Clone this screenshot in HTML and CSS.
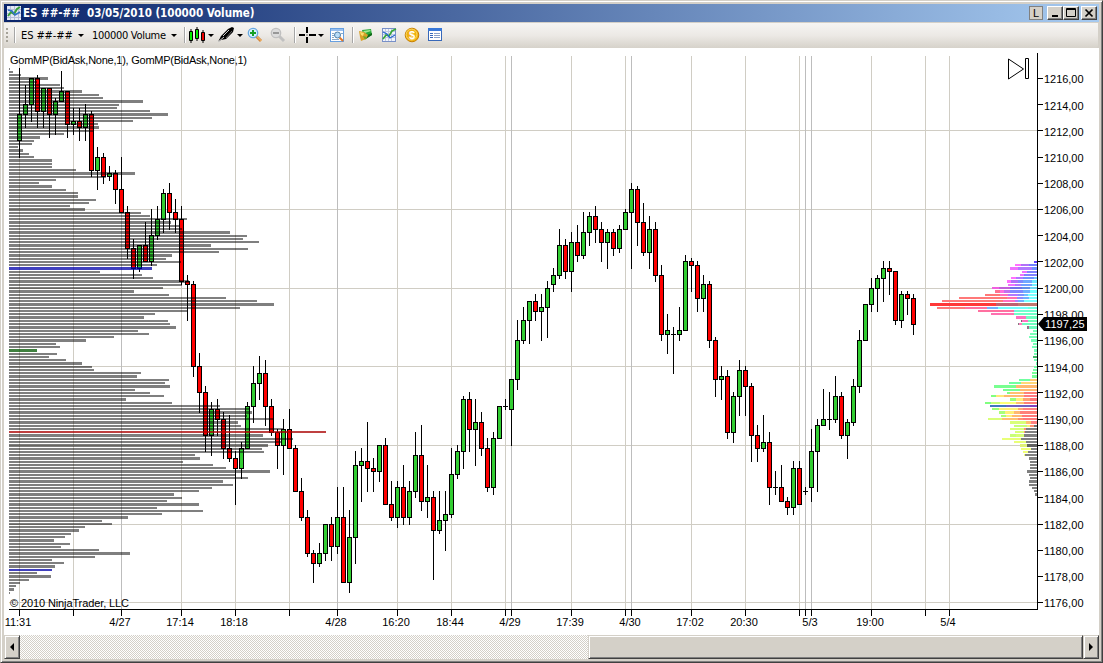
FILE: index.html
```html
<!DOCTYPE html>
<html lang="en">
<head>
    <meta charset="UTF-8">
    <title>ES ##-## 03/05/2010 (100000 Volume)</title>
    <link rel="stylesheet" href="styles.css">
</head>
<body>
    <div class="window">
        <div class="titlebar">
            <svg class="title-icon" width="14" height="14" viewBox="0 0 14 14">
                <rect width="14" height="14" fill="#e4e8f4"/>
                <path d="M3.5 0v14M7.5 0v14M11.5 0v14M0 3.5h14M0 7.5h14M0 11.5h14" stroke="#b4bcd8"/>
                <path d="M1 10l3-4 3 2 3-5 3-2" stroke="#38a038" stroke-width="2" fill="none"/>
                <path d="M1 4l4 1 3 4 5-3" stroke="#3070c8" stroke-width="1.6" fill="none"/>
            </svg>
            <span class="title">ES ##-##&nbsp; 03/05/2010 (100000 Volume)</span>
            <div class="title-buttons">
                <span class="tbtn link-btn">L</span>
                <span class="tbtn min-btn"><svg width="12" height="12"><rect x="3" y="8" width="6" height="2"/></svg></span>
                <span class="tbtn max-btn"><svg width="12" height="12"><path d="M1.5 1.5h9v8h-9zM1 2.5h10" fill="none" stroke="#000"/></svg></span>
                <span class="tbtn close-btn"><svg width="12" height="12"><path d="M2.5 2.5l7 7M9.5 2.5l-7 7" stroke="#000" stroke-width="1.7"/></svg></span>
            </div>
        </div>

        <div class="toolbar">
            <span class="grip"></span>
            <span class="sep"></span>
            <span class="tool-text instrument">ES ##-##</span>
            <span class="arrow wide"></span>
            <span class="tool-text interval">100000 Volume</span>
            <span class="arrow wide"></span>
            <span class="sep"></span>
            <svg width="18" height="18" viewBox="0 0 18 18">
                <path d="M3 3v14M9 1v14M15 4v13" stroke="#000"/>
                <path d="M1.5 5.5h3v9h-3z" fill="#0e0" stroke="#000"/>
                <path d="M7.500 3.5h3v9h-3z" fill="#0e0" stroke="#000"/>
                <path d="M13.500 6.5h3v8h-3z" fill="#e00" stroke="#000"/>
            </svg>
            <span class="arrow"></span>
            <svg width="18" height="18" viewBox="0 0 18 18">
                <path d="M1 16l3-6 7-7 4-2 2 1-1 4-7 7-5 1z" fill="#000"/>
                <path d="M6 10l6-6M1 16l6-5" stroke="#ccc"/>
                <path d="M9 12l6-7" stroke="#666"/>
            </svg>
            <span class="arrow"></span>
            <svg width="16" height="16" viewBox="0 0 16 16">
                <path d="M9 9l5 5" stroke="#d88838" stroke-width="3"/>
                <path d="M9.5 9l5 5" stroke="#f8c880"/>
                <circle cx="6" cy="6" r="4.7" fill="#d8f0ff" stroke="#68a8e0" stroke-width="1.3"/>
                <path d="M6 3v6M3 6h6" stroke="#18a028" stroke-width="2"/>
            </svg>
            <svg width="16" height="16" viewBox="0 0 16 16">
                <path d="M9 9l5 5" stroke="#c0c0c0" stroke-width="3"/>
                <circle cx="6" cy="6" r="4.7" fill="#dcdcdc" stroke="#c0c0c0" stroke-width="1.3"/>
                <path d="M3 6h6" stroke="#989898" stroke-width="2"/>
            </svg>
            <span class="sep"></span>
            <svg width="17" height="16" viewBox="0 0 17 16">
                <path d="M0 8h6M10 8h7M8 0v6M8 10v6" stroke="#000" stroke-width="2"/>
                <path d="M7.5 8h1" stroke="#000"/>
            </svg>
            <span class="arrow"></span>
            <svg width="16" height="16" viewBox="0 0 16 16">
                <rect x="1.5" y="1.5" width="13" height="13" fill="#fff" stroke="#68a0e0"/>
                <path d="M2 3h12" stroke="#98c0f0" stroke-width="2"/>
                <path d="M3 6.5h2M3 8.5h2M3 10.5h2M3 12.5h7M12 6.5h2" stroke="#88a8c8"/>
                <path d="M10.5 10.5l3.5 3.5" stroke="#e07828" stroke-width="2"/>
                <circle cx="8.5" cy="8" r="3" fill="#b8dcf8" stroke="#5080a8"/>
            </svg>
            <span class="sep"></span>
            <svg width="16" height="16" viewBox="0 0 16 16">
                <path d="M4 3l9-1 1 6-8 4z" fill="#28a838"/>
                <path d="M5 4l7-1 1 1-6 2z" fill="#a0e890"/>
                <path d="M7 9l7-3v2l-6 4z" fill="#106818"/>
                <path d="M1 4l5 1 4 3-2 4-5 2-1-4z" fill="#d8a028"/>
                <path d="M2 5l4 1-1 3-2-1z" fill="#f8e070"/>
                <path d="M5 9l4 1-2 3z" fill="#70a820"/>
            </svg>
            <svg width="16" height="16" viewBox="0 0 16 16">
                <rect x="1.5" y="1.5" width="13" height="13" fill="#f0f4fc" stroke="#7890c8"/>
                <path d="M4.5 2v12M7.5 2v12M10.5 2v12M2 4.5h12M2 7.5h12M2 10.5h12" stroke="#c0c8e0"/>
                <path d="M2 12l3-4 3 1 3-5 4-2" stroke="#38a838" stroke-width="1.7" fill="none"/>
                <path d="M2 5l4 2 3 4 5-3" stroke="#2868d0" stroke-width="1.3" fill="none"/>
            </svg>
            <svg width="16" height="16" viewBox="0 0 16 16">
                <circle cx="8" cy="8" r="6.8" fill="#f0b010" stroke="#c88000"/>
                <circle cx="7.5" cy="7.5" r="5.4" fill="none" stroke="#f8d868"/>
                <text class="coin" x="8" y="12" text-anchor="middle">$</text>
            </svg>
            <svg width="16" height="16" viewBox="0 0 16 16">
                <rect x="1.5" y="1.5" width="13" height="12" fill="#fff" stroke="#3868b8"/>
                <path d="M1 2.500h14" stroke="#3878d8" stroke-width="3"/>
                <path d="M3 6.5h3M3 8.5h3M3 10.5h3" stroke="#3868b8"/>
                <path d="M7 6.5h6M7 8.5h6M7 10.5h6" stroke="#88a0c8"/>
            </svg>
        </div>

        <svg id="chart" class="chart" width="1095" height="587" viewBox="4 48 1095 587"></svg>

        <div class="scrollbar">
            <span class="scroll-btn"><svg width="5" height="8"><path d="M4 0v8L0 4z"/></svg></span>
            <span class="track"></span>
            <span class="thumb"></span>
            <span class="scroll-btn"><svg width="5" height="8"><path d="M0 0v8l4-4z"/></svg></span>
        </div>
    </div>

    <script>
        const NS = 'http://www.w3.org/2000/svg';
        const chart = document.getElementById('chart');

        function add(tag, attrs, text) {
            const el = document.createElementNS(NS, tag);
            for (const key in attrs) el.setAttribute(key, attrs[key]);
            if (text) el.textContent = text;
            chart.appendChild(el);
            return el;
        }

        function rect(x, y, w, h, fill, opacity) {
            add('rect', { x, y, width: w, height: h, fill, 'fill-opacity': opacity || 1 });
        }

        // price -> y, one tick is 0.25
        function priceY(price) {
            return 130.9 + (1212 - price) * 13.104;
        }

        function rowAt(price) {
            const top = Math.floor(priceY(price) - 0.64);
            const next = Math.floor(priceY(price - 0.25) - 0.64);
            return { top, height: next - top - 1 };
        }

        // [x, label, session start]
        const times = [
            [19, '11:31'], [73], [121, '4/27', 1], [181, '17:14'], [235, '18:18'], [289],
            [337, '4/28', 1], [397, '16:20'], [451, '18:44'], [505], [511, '4/29', 1],
            [571, '17:39'], [625], [631, '4/30', 1], [691, '17:02'], [745, '20:30'],
            [799], [805, '', 1], [811, '5/3', 1], [871, '19:00'], [925], [949, '5/4']
        ];

        // grid
        for (let p = 1212; p >= 1176; p -= 6) {
            rect(9, Math.floor(priceY(p)), 1028, 1, '#d0cdc4');
        }
        times.forEach(([x, label, session]) => {
            rect(x, 56, 1, 553, session ? '#bdbdbd' : '#d0cdc4');
        });

        // [high, body top, body bottom, low, up]  (up = 2 means open equals close)
        const candles = [
            [68,114,141,158,1],[85,104,115,128,1],[78,78,105,122,1],[75,78,112,128,0],[88,88,112,128,1],
            [88,88,115,138,0],[98,101,115,135,1],[71,91,102,102,1],[91,91,125,138,0],[108,121,125,135,1],
            [108,121,128,141,0],[104,114,128,141,1],[111,114,171,177,0],[147,157,171,190,1],[153,157,177,184,0],
            [166,173,177,181,1],[170,173,190,204,0],[157,189,213,213,0],[206,212,249,259,0],[239,248,269,279,0],
            [245,245,269,272,1],[222,245,262,262,0],[209,235,262,266,1],[206,219,236,240,1],[189,193,220,233,1],
            [183,193,213,230,0],[199,212,220,233,0],[206,219,282,285,0],[275,281,285,321,0],[281,284,367,377,0],
            [353,366,393,413,0],[386,392,436,452,0],[402,409,436,456,1],[399,409,420,436,0],[412,419,449,459,0],
            [415,448,459,462,0],[451,458,469,505,0],[442,448,469,479,1],[402,406,449,449,1],[366,383,407,423,1],
            [356,373,384,400,1],[360,373,407,426,0],[399,406,433,436,0],[429,432,446,469,0],[419,429,446,475,1],
            [409,429,449,449,0],[445,448,492,492,0],[478,491,518,521,0],[510,517,554,557,0],[550,553,564,583,0],
            [543,553,564,567,1],[524,524,554,561,1],[517,524,547,561,0],[487,517,547,554,1],[487,517,583,583,0],
            [510,537,583,593,1],[451,465,538,564,1],[448,461,466,502,1],[422,461,469,492,0],[458,468,472,492,0],
            [445,445,472,482,1],[438,445,505,505,0],[481,504,518,521,0],[481,487,518,528,1],[465,487,518,525,0],
            [481,491,518,525,1],[432,455,492,498,1],[425,455,502,511,0],[465,497,502,518,1],[491,497,531,580,0],
            [491,520,531,534,1],[491,514,521,551,1],[448,474,515,518,1],[445,451,475,479,1],[396,399,452,469,1],
            [392,399,430,452,0],[399,422,430,466,1],[412,422,449,456,0],[438,448,488,492,0],[432,438,488,495,1],
            [406,406,439,439,1],[399,406,407,410,2],[379,379,410,446,1],[320,340,380,390,1],[307,320,341,344,1],
            [301,301,321,344,1],[294,301,312,321,0],[294,307,312,341,1],[281,288,308,338,1],[268,275,285,292,1],
            [229,245,276,279,1],[239,245,272,279,0],[232,242,272,292,1],[225,242,256,262,0],[212,232,256,259,1],
            [212,216,233,246,1],[206,216,230,243,0],[222,229,243,262,0],[229,232,243,269,1],[229,232,249,256,0],
            [225,229,249,253,1],[209,212,230,230,1],[183,189,213,269,1],[186,189,223,246,0],[203,222,253,256,0],
            [216,229,253,269,1],[222,229,276,282,0],[265,275,335,341,0],[314,330,335,354,1],[327,334,335,374,2],
            [307,330,335,341,1],[255,261,331,331,1],[258,261,266,292,0],[261,265,299,312,0],[275,284,299,312,1],
            [281,284,341,348,0],[337,340,380,397,0],[366,376,380,400,1],[370,376,433,439,0],[392,396,433,443,1],
            [360,370,397,416,1],[366,370,387,416,0],[383,386,436,462,0],[425,435,449,462,0],[415,442,449,452,1],
            [432,442,488,505,0],[471,487,488,495,2],[465,487,502,502,0],[497,501,508,515,0],[461,468,508,515,1],
            [461,468,505,505,0],[487,491,492,495,2],[429,451,488,502,1],[419,425,452,492,1],[389,419,426,426,1],
            [392,419,420,430,2],[376,396,420,423,1],[392,396,436,439,0],[419,422,436,459,1],[379,386,423,426,1],
            [330,340,387,393,1],[304,304,341,341,1],[278,288,305,312,1],[275,278,289,312,1],[261,268,279,302,1],
            [261,268,272,295,0],[271,271,321,325,0],[291,294,321,328,1],[291,294,299,315,0],[294,298,325,335,0]
        ];

        candles.forEach(([high, top, bottom, low, up], i) => {
            const x = 19 + i * 6;
            rect(x, high, 1, low - high, '#000');
            rect(x - 2, top, 5, bottom - top, '#000');
            if (up !== 2) {
                rect(x - 1, top + 1, 3, bottom - top - 2, up ? '#32cd32' : '#f00');
            }
        });

        // volume at price from 1216.75 down, right edges in thirds of a pixel
        const volume = [
            29,39,62,144,110,180,192,246,297,309,429,357,351,450,504,456,399,294,297,278,
            192,120,102,96,54,69,87,102,156,156,156,228,405,318,168,117,156,198,234,234,
            288,267,210,255,423,450,561,513,540,546,690,741,729,777,633,744,657,516,498,543,
            471,456,300,426,459,567,546,489,402,507,678,771,822,720,563,465,432,504,510,528,
            414,447,342,258,168,180,111,171,147,198,246,276,282,423,411,507,495,510,405,450,
            492,378,516,660,748,756,741,820,714,723,850,978,789,879,843,804,786,792,585,600,
            549,639,678,810,706,744,669,699,636,597,522,546,501,597,471,609,486,384,306,336,
            255,237,213,195,162,210,183,297,390,285,156,192,165,156,111,153,87,60,48,42,30
        ];
        const marked = { 61: '#0000aa', 86: '#005500', 111: '#aa0000', 153: '#0000aa' };

        volume.forEach((edge, k) => {
            const { top, height } = rowAt(1216.75 - k * 0.25);
            const w = Math.round(edge / 3) - 9;
            rect(9, top, w, height, marked[k] || '#000', marked[k] ? 0.75 : 0.5);
        });

        // session profile from 1202 down: "offset color offset color ...", up to the price axis
        const session = [
            '357 6040ff',
            '300 ff70ff 318 b070f8 342 7080ff',
            '285 f070ff 309 b078ff 351 7090ff',
            '321 f070ff 336 8080ff',
            '315 f070ff 327 8080ff',
            '288 ff70ff 303 b078ff 323 7090ff 358 70c8ff',
            '276 ff70ff 288 b070f8 309 8088ff 325 70a8ff 350 70e8ff',
            '279 f070ff 300 b078ff 318 70a0ff 350 70f0ff',
            '231 f060e0 253 c060d8 285 7070e8 320 6090e8 345 70d8f0',
            '240 ff7090 254 ff70e0 266 c070f0 285 8088ff 325 70b0ff 345 70ffff',
            '210 ff7878 254 ff70c0 280 b078ff 309 8090ff 327 70c0ff 340 78ffff',
            '132 ff7878 275 ff70b0 305 9088ff 325 70b0ff 342 78ffff',
            '81 ff7878 264 ff70c0 300 b080ff 309 70b0ff 327 78ffff',
            '45 ff3838 243 c06070 309 c07870',
            '66 ff7878 150 ff70a0 216 70b0ff 250 70ffff 340 70ffe0',
            '189 ff70a0 297 70e0ff 300 70ffd0',
            '228 ff70b0 297 70ffc8',
            '303 ff70c0 333 70ffc0',
            '318 707070 321 ff70c0 339 70ffb8',
            '309 808080 312 ff80c0 321 70ffc0',
            '336 808080 339 b06090 342 70ffc0',
            '354 78ffb8', '345 78ffb8', '342 78ffb8', '348 78ffb8', '354 78ffb8', '351 78ffb8',
            '357 78ffb8', '357 78ffb8', '354 40b868', '357 78ffb8', '363 78ffb8', '357 78ffa8',
            '354 78ffa8', '351 78ff98', '351 78ff98',
            '312 70ffa0 345 ffc870',
            '282 70ffa0 318 ffd878',
            '237 78ff90 303 ffb870',
            '264 78ff90 315 ffb870',
            '276 80ff80 285 ffc070 327 ff8078',
            '228 80ff80 244 ffe878 267 ffb870 327 ff7880',
            '285 98ff78 303 fff078 324 ffa070 345 ff7878',
            '210 80ff80 228 c8ff78 255 ffff78 303 ffc070 327 ff8078',
            '225 4078c0 273 7060c0 345 8040c0',
            '231 98ff78 252 fff078 309 ffa870 325 ff8080',
            '252 a8ff78 270 fff078 297 ffb870 315 ff8078',
            '258 a8ff78 273 fff078 291 ffb870 320 ff7878',
            '219 d8ff78 261 ffc070 309 ff9070 325 ff7878',
            '285 d8ff78 333 ffc070 348 ff8080',
            '297 c8ff78 336 fff078 345 ff9070 357 707070',
            '285 d8ff78 327 ff9070 333 808080',
            '300 d8ff78 327 ff9070 330 808080',
            '285 c8ff78 303 d8ff78 327 808080',
            '261 e8ff78 318 808080',
            '297 e8ff78 333 808080',
            '315 e0f078 336 606060',
            '318 f0ff78 348 808080',
            '324 f0ff78 339 808080',
            '327 f0ff78 330 808080',
            '342 808080', '345 808080', '345 808080', '345 808080', '336 808080', '342 808080',
            '345 808080', '342 808080', '342 808080', '351 808080', '357 808080', '360 808080'
        ];

        session.forEach((row, j) => {
            const { top, height } = rowAt(1202 - j * 0.25);
            const parts = row.split(' ');
            for (let n = 0; n < parts.length; n += 2) {
                const x = 915 + Math.round(parts[n] / 3);
                const end = parts[n + 2] ? 915 + Math.round(parts[n + 2] / 3) : 1037;
                rect(x, top, end - x, height, '#' + parts[n + 1]);
            }
        });

        // axes
        rect(1037, 53, 1, 557, '#000');
        rect(9, 609, 1029, 1, '#000');
        times.forEach(([x, label]) => {
            rect(x, 609, 1, 7, '#000');
            if (label) add('text', { x: x - 1, y: 626, 'text-anchor': 'middle' }, label);
        });
        for (let p = 1216; p >= 1176; p -= 2) {
            rect(1037, Math.floor(priceY(p)), 6, 1, '#000');
            add('text', { x: 1044, y: Math.round(priceY(p) + 4.85), textLength: 39.5 }, p + ',00');
        }

        // last price
        add('path', { d: 'M1038 324l6-7h43v14h-43z' });
        add('text', { x: 1045, y: 328, textLength: 39.5, class: 'last-price' }, '1197,25');

        add('text', { x: 10, y: 64, textLength: 237 }, 'GomMP(BidAsk,None,1), GomMP(BidAsk,None,1)');
        add('text', { x: 10, y: 607, textLength: 119 }, '© 2010 NinjaTrader, LLC');

        // jump to last bar
        add('path', { d: 'M1008.5 59v20l15-10zM1025.5 58.5h3v20h-3z', fill: 'none', stroke: '#000' });
    </script>
</body>
</html>
```
FILE: styles.css
```css
body {
    margin: 0;
    overflow: hidden;
    background-color: #d4d0c8;
    font-family: "DejaVu Sans Condensed", "DejaVu Sans", sans-serif;
    font-size: 11px;
}
.window {
    box-sizing: border-box;
    width: 1103px;
    height: 663px;
    padding: 3px;
    border: 1px solid #d4d0c8;
    border-right-color: #404040;
    border-bottom-color: #404040;
    box-shadow: inset 1px 1px #fff, inset -1px -1px #808080;
}
.titlebar {
    display: flex;
    align-items: center;
    width: 1095px;
    height: 18px;
    background: linear-gradient(to right, #0a246a, #a6caf0);
}
.title-icon {
    margin-left: 3px;
}
.title {
    flex: 1;
    margin-left: 2px;
    color: #fff;
    font-weight: bold;
    font-size: 11.5px;
    letter-spacing: -0.03px;
    white-space: nowrap;
}
.title-buttons {
    display: flex;
    margin-right: 2px;
}
.tbtn {
    box-sizing: border-box;
    display: flex;
    align-items: center;
    justify-content: center;
    width: 16px;
    height: 14px;
    background-color: #d4d0c8;
    border: 1px solid;
    border-color: #fff #404040 #404040 #fff;
    box-shadow: inset -1px -1px #808080;
}
.link-btn {
    width: 14px;
    margin-right: 4px;
    border-color: #808080;
    box-shadow: none;
    font-family: "Liberation Sans", sans-serif;
}
.close-btn {
    margin-left: 2px;
}
.toolbar {
    display: grid;
    grid-template-columns: 10px 7px 56px 16px 77px 14px 4px 18px 11px 18px 12px 23px 24px 5px 17px 13px 23px 6px 23px 23px 23px 23px;
    align-items: center;
    box-sizing: border-box;
    width: 1094px;
    height: 26px;
    padding-bottom: 1px;
    border-top: 1px solid #d4d0c8;
    border-radius: 0 0 3px 3px;
    background: linear-gradient(#f6f5f3, #ece9e5 50%, #d6d2ca);
}
.grip {
    width: 2px;
    height: 15px;
    margin-left: 2px;
    background: repeating-linear-gradient(#a5a298 0 2px, transparent 2px 4px);
}
.sep {
    width: 1px;
    height: 16px;
    background-color: #a6a6a6;
    box-shadow: 1px 0 #fff;
}
.tool-text {
    white-space: nowrap;
}
.instrument {
    letter-spacing: -0.1px;
}
.interval {
    margin-left: -1px;
    letter-spacing: -0.3px;
}
.arrow {
    width: 0;
    height: 0;
    margin-left: 2px;
    border: 3px solid transparent;
    border-top-color: #000;
    border-bottom: 0;
}
.arrow.wide {
    margin-left: 1px;
}
.coin {
    fill: #fff;
    font-family: "Liberation Sans", sans-serif;
    font-size: 11px;
    font-weight: bold;
}
.chart {
    display: block;
    background-color: #fff;
    font-family: "Liberation Sans", Arial, sans-serif;
    font-size: 11px;
}
.last-price {
    fill: #fff;
}
.scrollbar {
    display: flex;
    width: 1095px;
    height: 24px;
    background-color: #d4d0c8;
}
.scroll-btn, .thumb {
    box-sizing: border-box;
    background-color: #d4d0c8;
    border: 1px solid;
    border-color: #d4d0c8 #404040 #404040 #d4d0c8;
    box-shadow: inset 1px 1px #fff, inset -1px -1px #808080;
}
.scroll-btn {
    display: flex;
    align-items: center;
    justify-content: center;
    width: 16px;
}
.track {
    width: 568px;
    background: repeating-conic-gradient(#d4d0c8 0 25%, #fff 0 50%) 0 0 / 2px 2px;
}
.thumb {
    flex: 1;
}
```
